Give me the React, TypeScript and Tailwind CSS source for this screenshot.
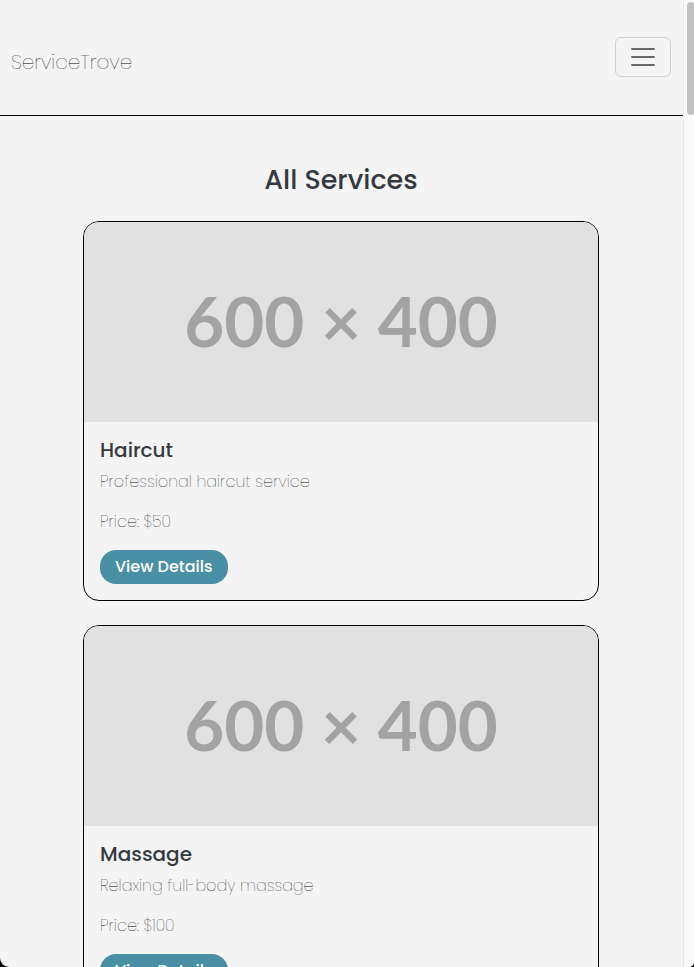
type Service = { name: string; description: string; price: number };

const services: Service[] = [
  { name: "Haircut", description: "Professional haircut service", price: 50 },
  { name: "Massage", description: "Relaxing full-body massage", price: 100 },
];

function Header() {
  return (
    <header className="flex h-29 items-center justify-between border-b border-black pr-3 pb-0.5 pl-[11px]">
      <a href="#" className="pt-2.5 text-xl font-thin text-black">
        ServiceTrove
      </a>
      <button
        type="button"
        aria-label="Toggle navigation"
        className="flex h-10 w-14 items-center justify-center rounded-md border border-[#cfcfcf]"
      >
        <svg viewBox="0 0 30 30" className="size-[30px]" aria-hidden="true">
          <path d="M4 7h22M4 15h22M4 23h22" stroke="#69696c" strokeWidth="2" strokeLinecap="round" />
        </svg>
      </button>
    </header>
  );
}

function ServiceCard({ service }: { service: Service }) {
  return (
    <article className="overflow-hidden rounded-2xl border border-black">
      <div className="flex h-50 items-center justify-center bg-[#e1e1e1] pb-1 font-['Lato',sans-serif] text-[69px] leading-none font-bold text-[#a3a3a3]">
        600 × 400
      </div>
      <div className="p-4">
        <h2 className="mb-2 text-xl leading-6 font-medium">{service.name}</h2>
        <p className="mb-4 font-thin text-black">{service.description}</p>
        <p className="mb-4 font-thin text-black">Price: ${service.price}</p>
        <button type="button" className="block h-[34px] rounded-2xl bg-[#4a90a4] px-[15px] font-medium text-white">
          View Details
        </button>
      </div>
    </article>
  );
}

export default function App() {
  return (
    <div className="h-screen bg-black">
      <div className="flex h-full overflow-hidden rounded-br-[5px] rounded-bl-[9px] bg-[#f4f4f4] font-['Poppins','Inter',sans-serif] text-[#343a40]">
        <div className="min-w-0 flex-1">
          <Header />
          <div className="pr-px">
            <main className="mx-auto max-w-[540px] px-3 pt-[47px]">
              <h1 className="mb-6 text-center text-[27px] leading-[34px] font-medium">All Services</h1>
              <div className="flex flex-col gap-6">
                {services.map((service) => (
                  <ServiceCard key={service.name} service={service} />
                ))}
              </div>
            </main>
          </div>
        </div>
        <div aria-hidden="true" className="w-[11px] shrink-0 border-l border-[#e8e8e8] bg-[#fafafa] pt-0.5 pl-[3px]">
          <div className="h-[113px] w-2 rounded-full bg-[#c1c1c1]" />
        </div>
      </div>
    </div>
  );
}
